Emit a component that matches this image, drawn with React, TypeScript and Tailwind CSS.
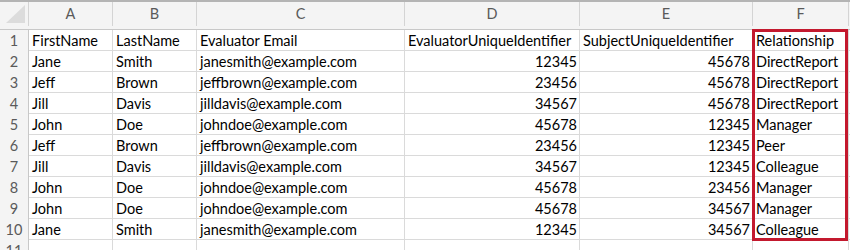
const COLS = ['A', 'B', 'C', 'D', 'E', 'F']

type Row = [string, string, string, string, string, string]

const ROWS: Row[] = [
  ['FirstName', 'LastName', 'Evaluator Email', 'EvaluatorUniqueIdentifier', 'SubjectUniqueIdentifier', 'Relationship'],
  ['Jane', 'Smith', 'janesmith@example.com', '12345', '45678', 'DirectReport'],
  ['Jeff', 'Brown', 'jeffbrown@example.com', '23456', '45678', 'DirectReport'],
  ['Jill', 'Davis', 'jilldavis@example.com', '34567', '45678', 'DirectReport'],
  ['John', 'Doe', 'johndoe@example.com', '45678', '12345', 'Manager'],
  ['Jeff', 'Brown', 'jeffbrown@example.com', '23456', '12345', 'Peer'],
  ['Jill', 'Davis', 'jilldavis@example.com', '34567', '12345', 'Colleague'],
  ['John', 'Doe', 'johndoe@example.com', '45678', '23456', 'Manager'],
  ['John', 'Doe', 'johndoe@example.com', '45678', '34567', 'Manager'],
  ['Jane', 'Smith', 'janesmith@example.com', '12345', '34567', 'Colleague'],
]

const GRID = 'grid grid-cols-[29px_84px_84px_208px_175px_173px_96px]'

export default function App() {
  return (
    <div className="relative h-[250px] w-[850px] overflow-hidden bg-white font-['Lato',sans-serif] text-[14.5px] text-black">
      <div className="border-t-2 border-[#b4b4b4]">
        {/* column letters */}
        <div className={`${GRID} h-[28px] border-b border-[#c8c8c8] bg-[#f4f4f4]`}>
          <div className="flex items-end justify-end border-r border-[#d4d4d4] pb-[3px] pr-[3px]">
            <svg width="19" height="18" viewBox="0 0 19 18">
              <polygon points="19,0 19,18 0,18" fill="#dcdcdc" />
            </svg>
          </div>
          {COLS.map((c) => (
            <div key={c} className="flex items-center justify-center border-r border-[#d4d4d4] text-[#5a5a5a]">
              {c}
            </div>
          ))}
          <div />
        </div>

        {[...ROWS, null].map((r, i) => (
          <div key={i} className={`${GRID} h-[21px] border-b border-[#dadada]`}>
            <div className="flex items-center justify-center border-r border-[#c8c8c8] bg-[#f4f4f4] text-[#5a5a5a]">
              {i + 1}
            </div>
            {COLS.map((c, j) => {
              const v = r ? r[j] : ''
              const num = i > 0 && (j === 3 || j === 4)
              return (
                <div
                  key={c}
                  className={`flex items-center overflow-hidden whitespace-nowrap border-r border-[#dadada] ${num ? 'justify-end pr-[2px]' : 'pl-[3px]'}`}
                >
                  {v}
                </div>
              )
            })}
            <div />
          </div>
        ))}
      </div>

      {/* highlight box around Relationship column */}
      <div className="pointer-events-none absolute left-[752px] top-[29px] h-[212px] w-[96px] border-[3px] border-[#c3192e]" />
    </div>
  )
}
